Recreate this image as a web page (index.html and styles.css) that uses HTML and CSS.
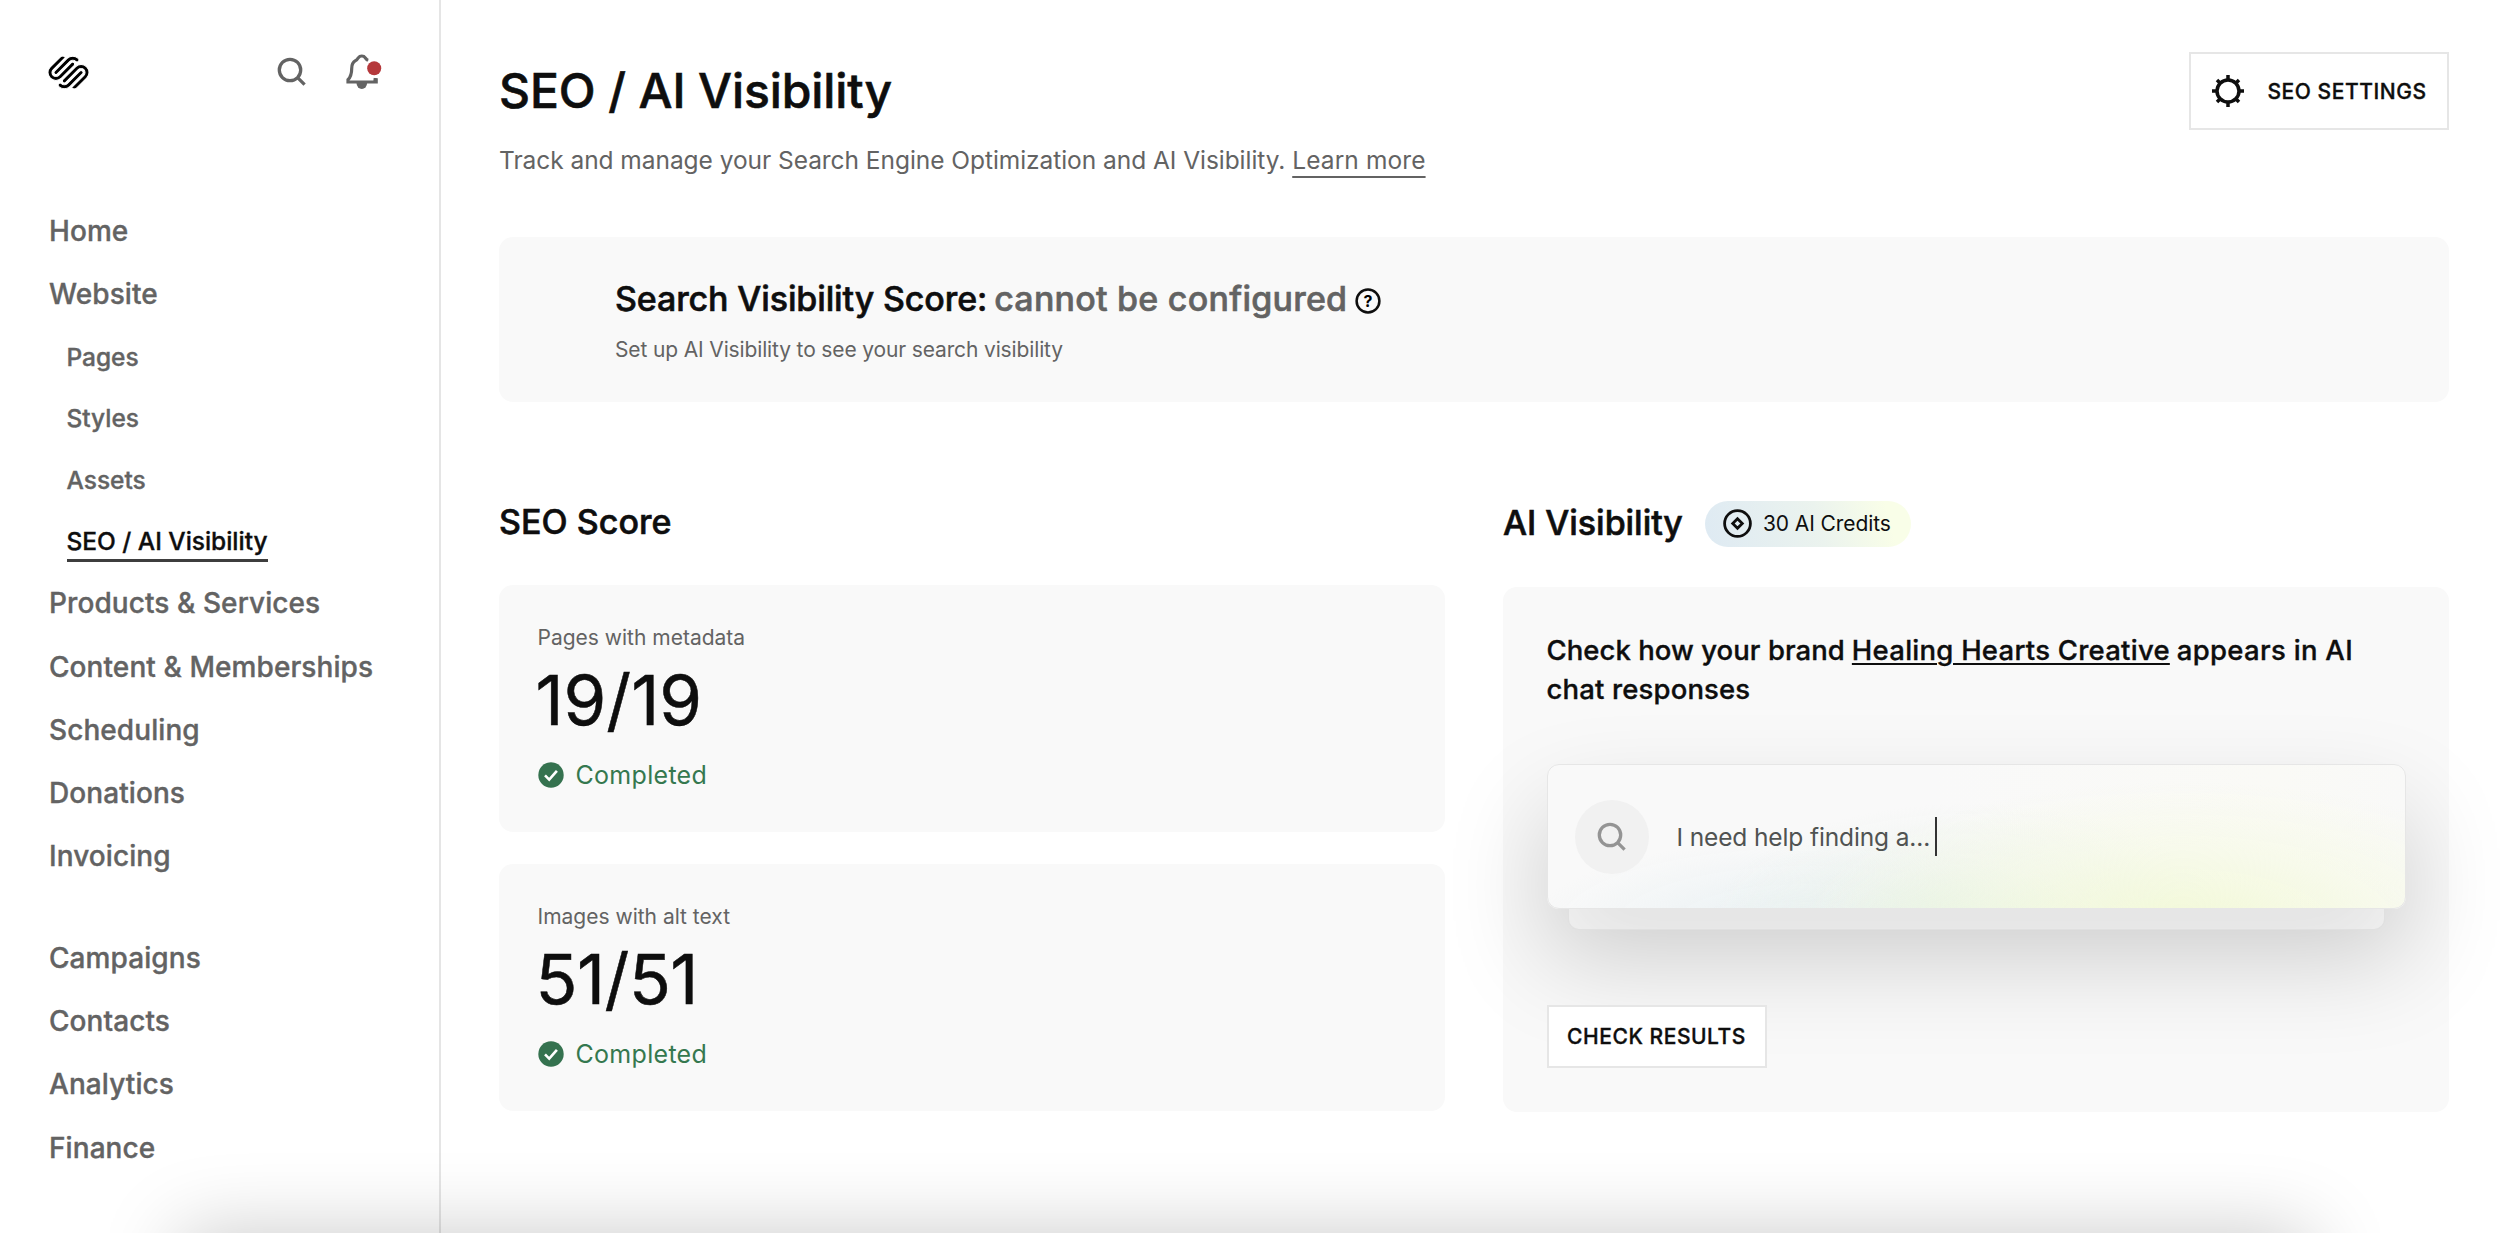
FILE: index.html
```
<!DOCTYPE html>
<html lang="en">
<head>
<meta charset="utf-8">
<title>SEO / AI Visibility</title>
<link rel="stylesheet" href="styles.css">
</head>
<body>
<div class="app">
  <aside class="sidebar">
    <div class="sidebar-top">
      <svg class="logo" viewBox="0 0 24 24" aria-label="Squarespace"><path d="M22.655 8.719c-1.802-1.801-4.726-1.801-6.564 0l-7.351 7.35c-.45.45-.45 1.2 0 1.65.45.449 1.2.449 1.65 0l7.351-7.351c.899-.899 2.362-.899 3.264 0 .9.9.9 2.364 0 3.264l-7.239 7.239c.9.899 2.362.899 3.263 0l5.589-5.589c1.836-1.838 1.836-4.763.037-6.563zm-2.475 2.437c-.451-.45-1.201-.45-1.65 0l-7.354 7.389c-.9.899-2.361.899-3.262 0-.45-.45-1.2-.45-1.65 0s-.45 1.2 0 1.649c1.801 1.801 4.726 1.801 6.564 0l7.351-7.35c.449-.487.449-1.239.001-1.688zm-2.439-7.35c-1.801-1.801-4.726-1.801-6.564 0l-7.351 7.351c-.45.449-.45 1.199 0 1.649s1.2.45 1.65 0l7.395-7.351c.9-.899 2.371-.899 3.27 0 .451.45 1.201.45 1.65 0 .421-.487.421-1.199-.05-1.649zm-2.475 2.475c-.45-.45-1.2-.45-1.65 0l-7.351 7.389c-.899.9-2.363.9-3.265 0-.9-.899-.9-2.363 0-3.263l7.239-7.239c-.9-.9-2.362-.9-3.263 0L1.35 8.719c-1.8 1.8-1.8 4.762 0 6.563 1.801 1.8 4.725 1.8 6.563 0l7.351-7.35c.452-.488.452-1.239.002-1.651z"/></svg>
      <div class="tools">
        <svg class="icon-search" viewBox="0 0 32 32"><circle cx="16" cy="14" r="10.7"/><path d="M23.6 21.6 30.6 28.6"/></svg>
        <svg class="icon-bell" viewBox="0 0 40 40"><path class="line" d="M23.3 8.3C21.6 8 21.2 7.2 20.3 5.8 19.4 4.5 18.2 4 16.8 4S14.2 4.5 13.3 5.8C12.5 7.2 12 7.9 10.5 8.7 7.7 10.3 6.7 13.5 6.7 16.5 6.7 21.5 6.3 24.5 3 27.7V30H31.2V27.6L28.5 27.3"/><path class="clapper" d="M11.5 31h10.600a5.300 6 0 0 1-10.600 0z"/><circle class="dot" cx="29.200" cy="16.300" r="7"/></svg>
      </div>
    </div>
    <nav class="nav">
      <a>Home</a>
      <a>Website</a>
      <a class="sub">Pages</a>
      <a class="sub">Styles</a>
      <a class="sub">Assets</a>
      <a class="sub active"><span>SEO / AI Visibility</span></a>
      <a>Products &amp; Services</a>
      <a>Content &amp; Memberships</a>
      <a>Scheduling</a>
      <a>Donations</a>
      <a>Invoicing</a>
      <a class="group">Campaigns</a>
      <a>Contacts</a>
      <a>Analytics</a>
      <a>Finance</a>
    </nav>
  </aside>

  <main class="main">
    <header class="header">
      <h1>SEO / AI Visibility</h1>
      <button class="btn settings">
        <svg class="icon-gear" viewBox="-17 -17 34 34"><circle r="11"/><path d="M0-12V-16M0 12V16M-12 0H-16M12 0H16M-8.500-8.500-11-11M8.500-8.500 11-11M-8.500 8.500-11 11M8.500 8.500 11 11"/></svg>
        <span>SEO SETTINGS</span>
      </button>
    </header>
    <p class="intro">Track and manage your Search Engine Optimization and AI Visibility. <a>Learn more</a></p>

    <section class="banner">
      <h2><span class="score">Search Visibility Score:</span> <span class="state">cannot be configured</span>
        <svg class="icon-help" viewBox="0 0 26 26"><circle cx="13" cy="13" r="11.400"/><text x="13" y="18.800" text-anchor="middle">?</text></svg></h2>
      <p>Set up AI Visibility to see your search visibility</p>
    </section>

    <div class="columns">
      <section class="seo">
        <h2>SEO Score</h2>
        <div class="card metric">
          <p class="label">Pages with metadata</p>
          <p class="value">19/19</p>
          <p class="status"><svg viewBox="0 0 26 26"><circle cx="13" cy="13" r="12.700"/><path d="M7 13.400 11.200 17.700 18.900 8.800"/></svg><span>Completed</span></p>
        </div>
        <div class="card metric">
          <p class="label">Images with alt text</p>
          <p class="value alt">51/51</p>
          <p class="status"><svg viewBox="0 0 26 26"><circle cx="13" cy="13" r="12.700"/><path d="M7 13.400 11.200 17.700 18.900 8.800"/></svg><span>Completed</span></p>
        </div>
      </section>

      <section class="ai">
        <div class="ai-head">
          <h2>AI Visibility</h2>
          <span class="credits"><svg viewBox="0 0 29 29"><circle cx="14.500" cy="14.500" r="12.900"/><path d="M14.500 9.700 19.300 14.500 14.500 19.300 9.700 14.500z"/></svg>30 AI Credits</span>
        </div>
        <div class="card check">
          <p class="question">
            <span class="line"><span>Check how your brand</span> <u>Healing Hearts Creative</u> <span>appears in AI</span></span>
            <span class="line">chat responses</span>
          </p>
          <div class="stack">
            <div class="prompt">
              <span class="prompt-icon"><svg class="icon-search" viewBox="0 0 32 32"><circle cx="16" cy="14" r="10.700"/><path d="M23.600 21.600 30.600 28.600"/></svg></span>
              <span class="prompt-text">I need help finding a...</span>
              <span class="caret"></span>
            </div>
            <div class="under"></div>
          </div>
          <button class="btn results">CHECK RESULTS</button>
        </div>
      </section>
    </div>
  </main>
</div>
<div class="dock"></div>
</body>
</html>
```
FILE: styles.css
```
* { box-sizing: border-box; }

body {
  margin: 0;
  height: 1233px;
  overflow: hidden;
  background: #fff;
  color: #0e0e0e;
  font-family: Inter, "Liberation Sans", sans-serif;
}

h1, h2, p { margin: 0; font-weight: 500; }

/* Slightly heavier than medium */
h1, h2 { -webkit-text-stroke: .6px; }
.nav a, .btn, .question { -webkit-text-stroke: .35px; }

.app { display: flex; height: 1233px; }

/* Sidebar */
.sidebar {
  flex: none;
  width: 441px;
  padding: 52px 54px 0 48px;
  border-right: 2px solid #e5e5e5;
}
.sidebar-top {
  display: flex;
  align-items: center;
  justify-content: space-between;
  height: 40px;
}
.logo { width: 41px; height: 41px; fill: #000; stroke: #fff; stroke-width: .6; }
.tools { display: flex; align-items: center; gap: 39px; }
.icon-search { width: 32px; height: 32px; fill: none; stroke: #636363; stroke-width: 3.3; }
.icon-bell { width: 40px; height: 40px; }
.icon-bell .line { fill: none; stroke: #636363; stroke-width: 3.2; }
.icon-bell .clapper { fill: #636363; }
.icon-bell .dot { fill: #b5383b; stroke: #fff; stroke-width: 5; paint-order: stroke; }

.nav { display: flex; flex-direction: column; margin-top: 107px; }
.nav a {
  display: flex;
  align-items: center;
  height: 63.3px;
  padding-left: 1px;
  color: #636363;
  font-size: 28px;
  font-weight: 500;
  letter-spacing: .08px;
  white-space: nowrap;
}
.nav .sub {
  height: 61.5px;
  padding: 1px 0 0 18.5px;
  font-size: 24.5px;
  letter-spacing: -.03px;
}
.nav .active { color: #0e0e0e; }
.nav .active span {
  line-height: 36px;
  border-top: 3px solid transparent;
  border-bottom: 3px solid #3e3e3e;
}
.nav .group { margin-top: 38px; }

/* Main */
.main {
  flex: 1;
  display: flex;
  flex-direction: column;
  padding: 52px 51px 0 58px;
}
.header { display: flex; align-items: center; justify-content: space-between; height: 78px; }
h1 { font-size: 48px; line-height: 60px; letter-spacing: -.1px; }

.btn {
  display: flex;
  align-items: center;
  justify-content: center;
  padding: 0;
  border: 2px solid #e6e6e6;
  background: #fff;
  color: #0e0e0e;
  font: 500 21px Inter, "Liberation Sans", sans-serif;
  letter-spacing: .55px;
}
.settings { width: 260px; height: 78px; gap: 22px; }
.icon-gear { width: 34px; height: 34px; fill: none; stroke: #0e0e0e; stroke-width: 3.5; }

.intro {
  margin-top: 13px;
  color: #636363;
  font-size: 24.5px;
  font-weight: 400;
  line-height: 34px;
  letter-spacing: -.05px;
}
.intro a {
  letter-spacing: .1px;
  text-decoration: underline 2px;
  text-underline-offset: 6.5px;
  text-decoration-skip-ink: none;
}

.banner {
  height: 165px;
  margin-top: 60px;
  padding: 42px 0 0 116px;
  border-radius: 14px;
  background: #f9f9f9;
}
h2 { font-size: 34px; line-height: 40px; }
.banner h2 { display: flex; align-items: center; }
.score { letter-spacing: -.13px; }
.state { margin-left: 7px; color: #636363; letter-spacing: .23px; }
.icon-help { width: 26px; height: 26px; margin: 3px 0 0 8px; }
.icon-help circle { fill: none; stroke: #0e0e0e; stroke-width: 2.5; }
.icon-help text { font: 700 16px Inter, sans-serif; -webkit-text-stroke: 0; }
.banner p {
  margin-top: 17px;
  color: #636363;
  font-size: 21px;
  font-weight: 400;
  line-height: 28px;
  letter-spacing: -.14px;
}

/* Score columns */
.columns { display: flex; justify-content: space-between; margin-top: 99px; }
.seo, .ai { width: 946px; }
.card { border-radius: 14px; background: #f9f9f9; }

.seo h2 { padding-top: 1px; margin-bottom: 43px; letter-spacing: .05px; }
.metric { height: 247.4px; padding: 39px 0 0 38.5px; }
.metric + .metric { margin-top: 31.5px; }
.label { color: #636363; font-size: 21px; font-weight: 400; line-height: 28px; }
.value {
  margin: 13px 0 0 -2px;
  font-size: 69px;
  font-weight: 400;
  line-height: 70px;
  -webkit-text-stroke: .5px;
}
.value.alt { letter-spacing: -.5px; }
.status {
  display: flex;
  align-items: center;
  gap: 12px;
  margin-top: 23px;
  color: #35784f;
  font-size: 25px;
  font-weight: 400;
  line-height: 34px;
  letter-spacing: .3px;
}
.status svg { width: 26px; height: 26px; }
.status circle { fill: #35724f; }
.status path { fill: none; stroke: #fff; stroke-width: 2.6; }

.ai-head { display: flex; align-items: center; gap: 22px; height: 45.5px; margin-bottom: 40.5px; }
.ai-head h2 { letter-spacing: -.05px; margin-top: -1px; }
.credits {
  display: flex;
  align-items: center;
  gap: 11px;
  width: 206px;
  height: 45.5px;
  padding-left: 18px;
  border-radius: 23px;
  background: linear-gradient(75deg, #deeaf3, #ebf3ee 55%, #f9fee8 88%);
  font-size: 21px;
  white-space: nowrap;
  letter-spacing: -.08px;
}
.credits svg { width: 29px; height: 29px; fill: none; stroke: #0e0e0e; stroke-width: 2.8; }

.check { height: 524.7px; padding: 44px 43.5px 0 43.5px; }
.question {
  font-size: 27.5px;
  line-height: 38.7px;
  letter-spacing: .15px;
}
.question .line { display: flex; gap: 7px; white-space: nowrap; }
.question .line > :first-child { letter-spacing: .05px; }
.question u { text-decoration-thickness: 2px; text-underline-offset: 3px; letter-spacing: .25px; }
.question u + span { letter-spacing: .3px; }
.stack { margin-top: 55.5px; }
.prompt {
  display: flex;
  align-items: center;
  height: 145.5px;
  padding-left: 27px;
  border: 1px solid #e6e6e6;
  border-radius: 12px;
  background:
    radial-gradient(ellipse 44% 100% at 74% 112%, rgba(242, 249, 214, .95), rgba(246, 250, 228, .6) 55%, rgba(249, 250, 246, 0)),
    radial-gradient(ellipse 30% 85% at 49% 112%, rgba(219, 238, 220, .85), rgba(232, 241, 233, .5) 50%, rgba(249, 249, 249, 0)),
    radial-gradient(ellipse 32% 60% at 30% 112%, rgba(229, 239, 242, .8), rgba(249, 249, 249, 0)),
    linear-gradient(90deg, #f9f9f9 45%, #fafaf6 85%, #f9f9f8);
  box-shadow: 0 48px 100px rgba(0, 0, 0, .18);
}
.prompt-icon {
  display: flex;
  align-items: center;
  justify-content: center;
  width: 74px;
  height: 74px;
  padding-right: 3px;
  border-radius: 50%;
  background: #f1f1f1;
}
.prompt-icon .icon-search { stroke: #949494; }
.prompt-text {
  margin-left: 28px;
  padding-top: 1px;
  color: #505352;
  font-size: 24.5px;
  font-weight: 400;
  letter-spacing: -.13px;
}
.caret { width: 2px; height: 39px; margin-left: 5px; background: #333; }
.under {
  height: 21px;
  margin: 0 21px;
  border: 1px solid #e0e0e0;
  border-top: 0;
  border-radius: 0 0 11px 11px;
  background: rgba(255, 255, 255, .4);
}
.results { width: 220px; height: 63px; margin-top: 74.5px; }

.dock {
  position: fixed;
  top: 100%;
  left: 180px;
  right: 190px;
  height: 120px;
  box-shadow: 0 0 80px rgba(0, 0, 0, .21);
}
```
